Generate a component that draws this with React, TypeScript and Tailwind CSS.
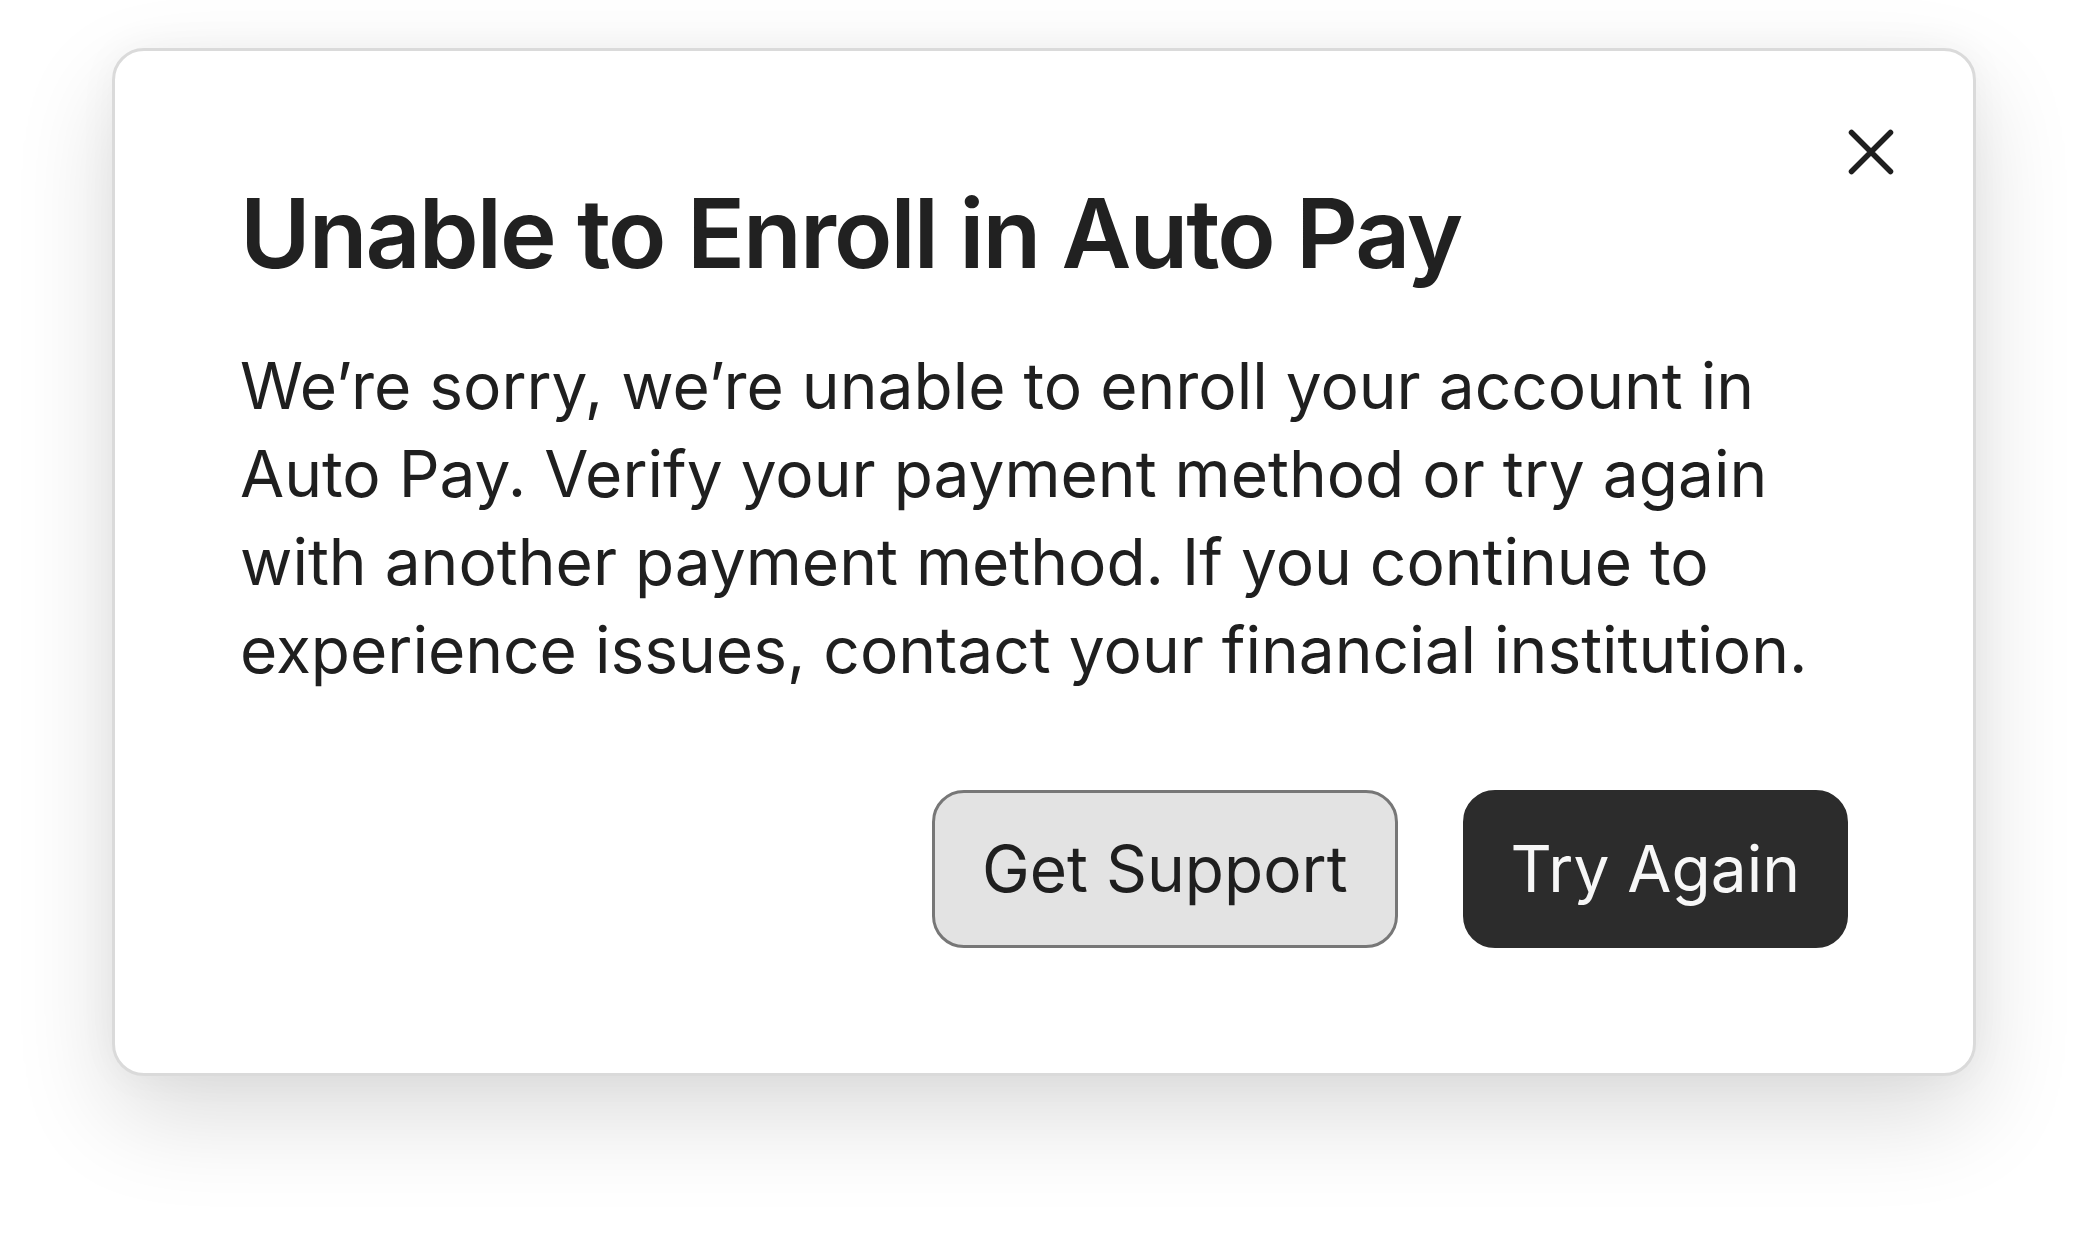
import React from "react";

const ErrorDialog: React.FC = () => {
  return (
    <div className="relative rounded-[32px] border-[3px] border-[#dadada] bg-white p-[125px] shadow-[0_40px_100px_rgba(0,0,0,0.14),0_0_40px_rgba(0,0,0,0.04)]">
      <button
        type="button"
        aria-label="Close"
        className="absolute right-[78px] top-[77px] flex h-12 w-12 items-center justify-center text-[#1f1f1f]"
      >
        <svg width="48" height="48" viewBox="0 0 48 48" fill="none">
          <path
            d="M4.5 4.5 L43.5 43.5 M43.5 4.5 L4.5 43.5"
            stroke="currentColor"
            strokeWidth="5.5"
            strokeLinecap="round"
          />
        </svg>
      </button>

      <h1 className="text-[96px] font-semibold leading-[115px] tracking-[-0.02em] text-[#212121]">
        Unable to Enroll in Auto Pay
      </h1>

      <p className="mt-[51px] text-[64px] leading-[88px] text-[#1f1f1f]">
        We’re sorry, we’re unable to enroll your account in Auto Pay. Verify
        your payment method or try again with another payment method. If you
        continue to experience issues, contact your financial institution.
      </p>

      <div className="mt-[96px] flex justify-end gap-[65px]">
        <button
          type="button"
          className="rounded-[32px] border-[3px] border-[#777777] bg-[#e3e3e3] px-[47px] py-8 text-[64px] leading-[88px] text-[#1f1f1f]"
        >
          Get Support
        </button>
        <button
          type="button"
          className="rounded-[32px] border-[3px] border-[#2c2c2c] bg-[#2c2c2c] px-[45px] py-8 text-[64px] leading-[88px] text-[#f7f7f7]"
        >
          Try Again
        </button>
      </div>
    </div>
  );
};

export default function App() {
  return (
    <div
      className="min-h-screen bg-white px-[112px] pt-[48px]"
      style={{ fontFamily: "Inter, 'Noto Sans', sans-serif" }}
    >
      <ErrorDialog />
    </div>
  );
}
